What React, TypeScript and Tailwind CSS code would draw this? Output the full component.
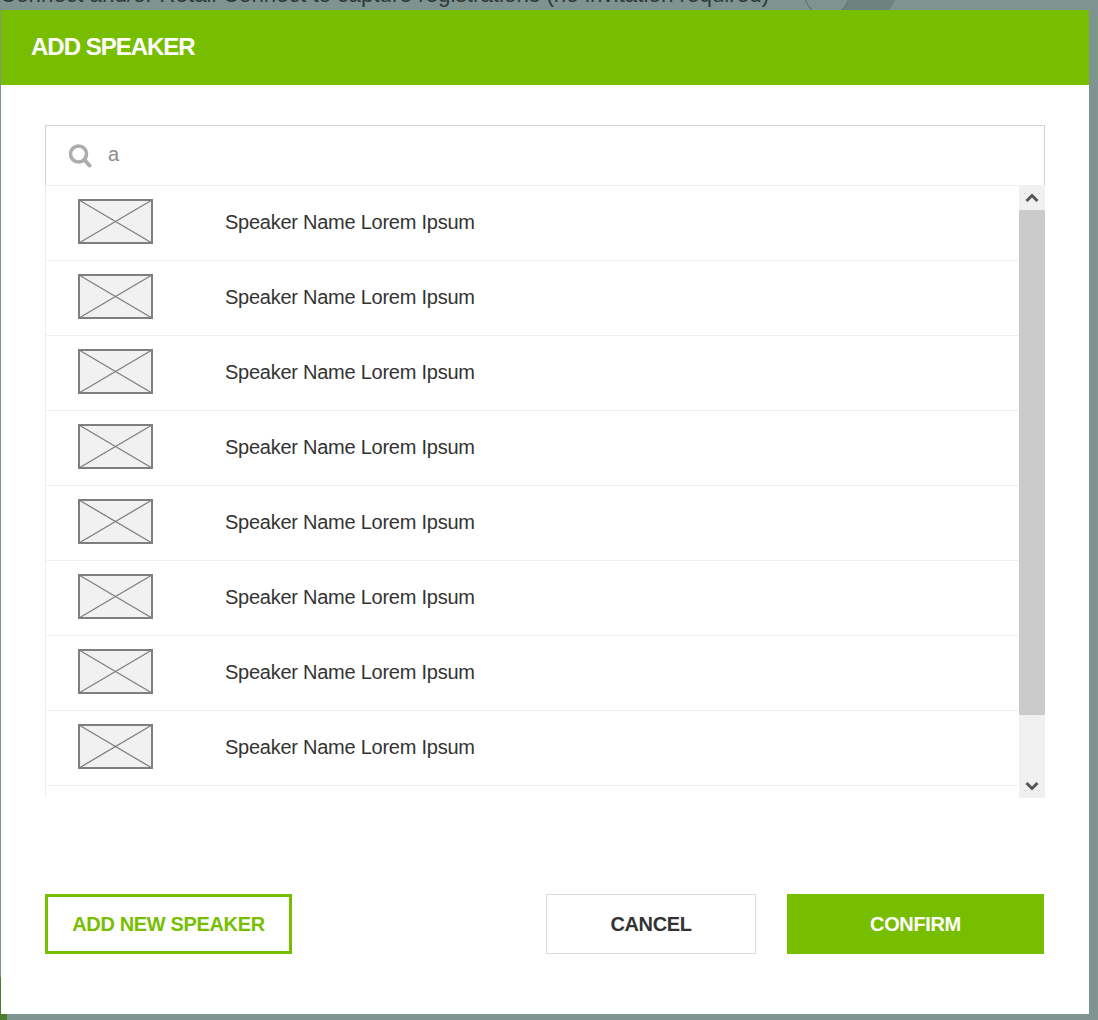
const speakers = Array.from({ length: 8 }, (_, i) => i);

const Placeholder = () => (
  <svg width="75" height="45" viewBox="0 0 75 45" className="mb-[2px] block">
    <rect x="1" y="1" width="73" height="43" fill="#f1f1f1" stroke="#7f7f7f" strokeWidth="2" />
    <path d="M1 1 L74 44 M74 1 L1 44" stroke="#7f7f7f" strokeWidth="1.3" fill="none" />
  </svg>
);

const ScrollArrow = ({ up }: { up?: boolean }) => (
  <svg width="14" height="11" viewBox="0 0 14 11">
    <path d={up ? 'M1.5 9 L7 3.5 L12.5 9' : 'M1.5 2 L7 7.5 L12.5 2'} stroke="#555" strokeWidth="3" fill="none" />
  </svg>
);

const SearchGlyph = () => (
  <svg width="24" height="24" viewBox="0 0 24 24" fill="none" stroke="#adadad">
    <circle cx="10.5" cy="10" r="8" strokeWidth="3.6" />
    <path d="M16.5 16 L21.5 21.5" strokeWidth="4" strokeLinecap="round" />
  </svg>
);

export default function App() {
  return (
    <div className="relative h-[1020px] w-[1098px] overflow-hidden bg-[#7f9490] font-['Liberation_Sans',Arial,sans-serif]">
      {/* page behind the overlay */}
      <div className="absolute left-0 top-[-17px] whitespace-nowrap text-[22.4px] leading-[24px] text-[#2f3a38]">
        Connect and/or Retail Connect to capture registrations (no invitation required)
      </div>
      <div className="absolute left-[804px] top-[-30px] h-[46px] w-[92px] rounded-full bg-[#6f8280]">
        <div className="h-[46px] w-[46px] rounded-full border border-[#5d6f6d] bg-[#7f9490]" />
      </div>
      <div className="absolute bottom-0 left-0 h-[43px] w-[7px] bg-[#4c7f2b]" />

      {/* modal */}
      <div className="relative ml-px mt-[10px] flex h-[1004px] w-[1088px] flex-col bg-white">
        <div className="flex h-[75px] items-center bg-[#78be00] pb-[2px] pl-[30px]">
          <h2 className="text-[24px] font-bold tracking-[-1px] text-white">ADD SPEAKER</h2>
        </div>

        <div className="flex flex-1 flex-col px-[44px] pt-[40px]">
          {/* search */}
          <div className="flex h-[60px] items-center border border-b-0 border-[#d2d2d2] pl-[22px]">
            <SearchGlyph />
            <span className="mb-[4px] ml-[16px] text-[20px] text-[#8c8c8c]">a</span>
          </div>

          {/* list */}
          <div className="flex h-[613px] border-l border-[#eeeeee]">
            <div className="flex-1 overflow-hidden border-t border-[#eeeeee]">
              {speakers.map((i) => (
                <div key={i} className="flex h-[75px] items-center border-b border-[#f0f0f0] pb-[2px] pl-[32px]">
                  <Placeholder />
                  <span className="ml-[72px] text-[20px] tracking-[-0.25px] text-[#333333]">Speaker Name Lorem Ipsum</span>
                </div>
              ))}
            </div>
            <div className="flex w-[26px] flex-col bg-[#f0f0f0]">
              <div className="flex h-[25px] items-center justify-center">
                <ScrollArrow up />
              </div>
              <div className="h-[505px] bg-[#cbcbcb]" />
              <div className="flex flex-1 items-end justify-center pb-[6px]">
                <ScrollArrow />
              </div>
            </div>
          </div>

          {/* actions */}
          <div className="mt-[96px] flex items-center">
            <button className="h-[60px] w-[247px] border-[3px] border-[#78be00] text-[20px] font-bold tracking-[-0.35px] text-[#78be00]">
              ADD NEW SPEAKER
            </button>
            <button className="ml-[254px] h-[60px] w-[210px] border border-[#d9d9d9] text-[20px] font-bold tracking-[-0.35px] text-[#333333]">
              CANCEL
            </button>
            <button className="ml-[31px] h-[60px] w-[257px] bg-[#78be00] text-[20px] font-bold tracking-[-0.35px] text-white">
              CONFIRM
            </button>
          </div>
        </div>
      </div>
    </div>
  );
}
